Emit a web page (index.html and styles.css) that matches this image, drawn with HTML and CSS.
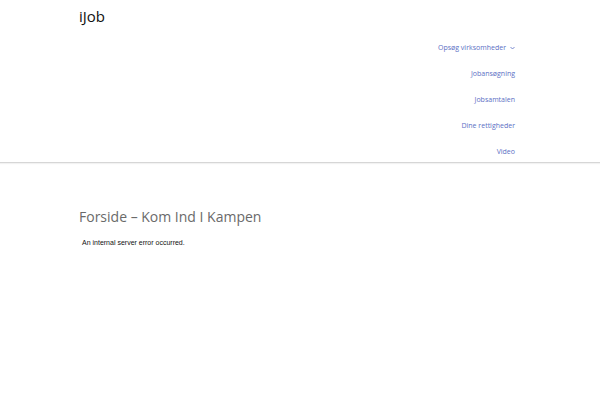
FILE: index.html
```html
<!DOCTYPE html>
<html lang="da">
<head>
  <meta charset="UTF-8" />
  <title>Forside – Kom Ind I Kampen</title>
  <link rel="stylesheet" href="styles.css">
</head>
<body>
  <header class="site-header">
    <div class="wrap header-inner">
      <div class="brand">iJob</div>
      <nav class="main-nav">
        <a href="#">Opsøg virksomheder
          <svg class="caret" width="5" height="4" viewBox="0 0 5 4"><path d="M0.5 1 L2.5 3 L4.5 1" fill="none" stroke="currentColor" stroke-width="0.8"/></svg>
        </a>
        <a href="#">Jobansøgning</a>
        <a href="#">Jobsamtalen</a>
        <a href="#">Dine rettigheder</a>
        <a href="#">Video</a>
      </nav>
    </div>
  </header>

  <main class="wrap content">
    <h1 class="page-title">Forside – Kom Ind I Kampen</h1>
    <p class="error">An internal server error occurred.</p>
  </main>
</body>
</html>
```

FILE: styles.css
```css
body {
  margin: 0;
  background: #fff;
  font-family: "Open Sans", sans-serif;
  color: #333;
}

.wrap {
  width: 436px;
  margin: 0 0 0 79px;
}

.site-header {
  border-bottom: 1px solid #d6d6d6;
  box-shadow: 0 1px 1px rgba(0, 0, 0, 0.05);
  height: 162px;
}

.header-inner {
  display: flex;
  flex-direction: column;
}

.brand {
  font-family: "Open Sans", sans-serif;
  font-size: 15px;
  color: #111;
  padding-top: 6px;
  line-height: 20px;
}

.main-nav {
  display: flex;
  flex-direction: column;
  align-items: flex-end;
  margin-top: 9px;
}

.main-nav a {
  font-size: 7px;
  line-height: 26px;
  color: #5b6fc4;
  text-decoration: none;
  display: flex;
  align-items: center;
}

.caret {
  margin-left: 4px;
}

.content {
  padding-top: 45px;
}

.page-title {
  margin: 0;
  font-family: "Open Sans", sans-serif;
  font-weight: 400;
  font-size: 14px;
  color: #6a6a6a;
  line-height: 18px;
}

.error {
  margin: 13px 0 0 3px;
  font-family: "Liberation Sans", Arial, sans-serif;
  font-size: 7px;
  color: #111;
}
```
